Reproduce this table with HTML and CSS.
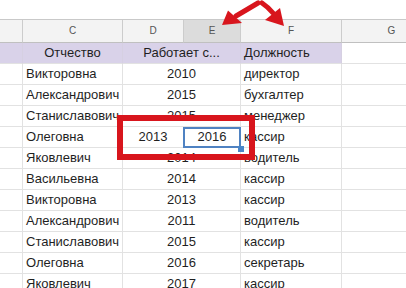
FILE: index.html
```html
<!DOCTYPE html>
<html lang="ru">
<head>
<meta charset="utf-8">
<link rel="stylesheet" href="styles.css">
</head>
<body>
<div class="sheet">
  <div class="row colhead">
    <div class="cell"></div>
    <div class="cell">C</div>
    <div class="cell">D</div>
    <div class="cell sel">E</div>
    <div class="cell">F</div>
    <div class="cell">G</div>
  </div>
  <div class="row title">
    <div class="cell"></div>
    <div class="cell center">Отчество</div>
    <div class="cell center span2">Работает с...</div>
    <div class="cell">Должность</div>
    <div class="cell blank"></div>
  </div>
  <div class="row"><div class="cell"></div><div class="cell">Викторовна</div><div class="cell center span2">2010</div><div class="cell">директор</div><div class="cell"></div></div>
  <div class="row"><div class="cell"></div><div class="cell">Александрович</div><div class="cell center span2">2015</div><div class="cell">бухгалтер</div><div class="cell"></div></div>
  <div class="row"><div class="cell"></div><div class="cell">Станиславович</div><div class="cell center span2">2015</div><div class="cell">менеджер</div><div class="cell"></div></div>
  <div class="row"><div class="cell"></div><div class="cell">Олеговна</div><div class="cell center">2013</div><div class="cell center active">2016</div><div class="cell">кассир</div><div class="cell"></div></div>
  <div class="row"><div class="cell"></div><div class="cell">Яковлевич</div><div class="cell center span2">2014</div><div class="cell">водитель</div><div class="cell"></div></div>
  <div class="row"><div class="cell"></div><div class="cell">Васильевна</div><div class="cell center span2">2014</div><div class="cell">кассир</div><div class="cell"></div></div>
  <div class="row"><div class="cell"></div><div class="cell">Викторовна</div><div class="cell center span2">2013</div><div class="cell">кассир</div><div class="cell"></div></div>
  <div class="row"><div class="cell"></div><div class="cell">Александрович</div><div class="cell center span2">2011</div><div class="cell">водитель</div><div class="cell"></div></div>
  <div class="row"><div class="cell"></div><div class="cell">Станиславович</div><div class="cell center span2">2015</div><div class="cell">кассир</div><div class="cell"></div></div>
  <div class="row"><div class="cell"></div><div class="cell">Олеговна</div><div class="cell center span2">2016</div><div class="cell">секретарь</div><div class="cell"></div></div>
  <div class="row"><div class="cell"></div><div class="cell">Яковлевич</div><div class="cell center span2">2017</div><div class="cell">кассир</div><div class="cell"></div></div>

  <div class="redbox"></div>
  <svg class="arrows" width="406" height="40" viewBox="0 0 406 40">
    <path d="M258 3 Q248 9 236 16" fill="none" stroke="#d8151d" stroke-width="5" stroke-linecap="round"/>
    <polygon points="222,25 228,10.5 242,23" fill="#d8151d"/>
    <path d="M262 3 Q268 7 273 13" fill="none" stroke="#d8151d" stroke-width="5" stroke-linecap="round"/>
    <polygon points="284,26 265,20 280,8" fill="#d8151d"/>
  </svg>
</div>
</body>
</html>
```
FILE: styles.css
```css
html, body {
  margin: 0;
  padding: 0;
  background: #ffffff;
}

.sheet {
  position: relative;
  width: 406px;
  height: 288px;
  overflow: hidden;
  padding-top: 19px;
  box-sizing: border-box;
  font-family: "Liberation Sans", Arial, sans-serif;
  font-size: 13px;
  color: #1f1f1f;
}

.row {
  display: grid;
  grid-template-columns: 23px 100px 61px 57px 101px 100px;
  width: 442px;
}

.cell {
  box-sizing: border-box;
  height: 21px;
  line-height: 20px;
  padding: 0 3px;
  border-right: 1px solid #e2e2e2;
  border-bottom: 1px solid #e2e2e2;
  white-space: nowrap;
  overflow: hidden;
}

.center {
  text-align: center;
}

.span2 {
  grid-column: span 2;
}

.colhead {
  border-top: 1px solid #c9c9c9;
}

.colhead .cell {
  height: 23px;
  line-height: 22px;
  background: #f3f3f3;
  border-right-color: #cccccc;
  border-bottom-color: #c0c0c0;
  font-size: 10px;
  color: #555555;
  text-align: center;
}

.colhead .cell.sel {
  background: #dcdcdc;
}

.title .cell {
  background: #d9d2e9;
  border-right-color: #d6d0e2;
}

.title .cell.blank {
  background: #ffffff;
  border-right-color: #e2e2e2;
}

.active {
  position: relative;
  overflow: visible;
}

.active::after {
  content: "";
  position: absolute;
  left: -1px;
  right: -1px;
  top: 0;
  bottom: -1px;
  border: 2px solid #4f82c2;
  box-sizing: border-box;
}

.active::before {
  content: "";
  position: absolute;
  right: -4px;
  bottom: -5px;
  width: 6px;
  height: 6px;
  background: #4a86c8;
  z-index: 2;
}

.redbox {
  position: absolute;
  left: 117px;
  top: 115px;
  width: 138px;
  height: 45px;
  border: 6px solid #d8151d;
  box-sizing: border-box;
}

.arrows {
  position: absolute;
  left: 0;
  top: 0;
}
```
